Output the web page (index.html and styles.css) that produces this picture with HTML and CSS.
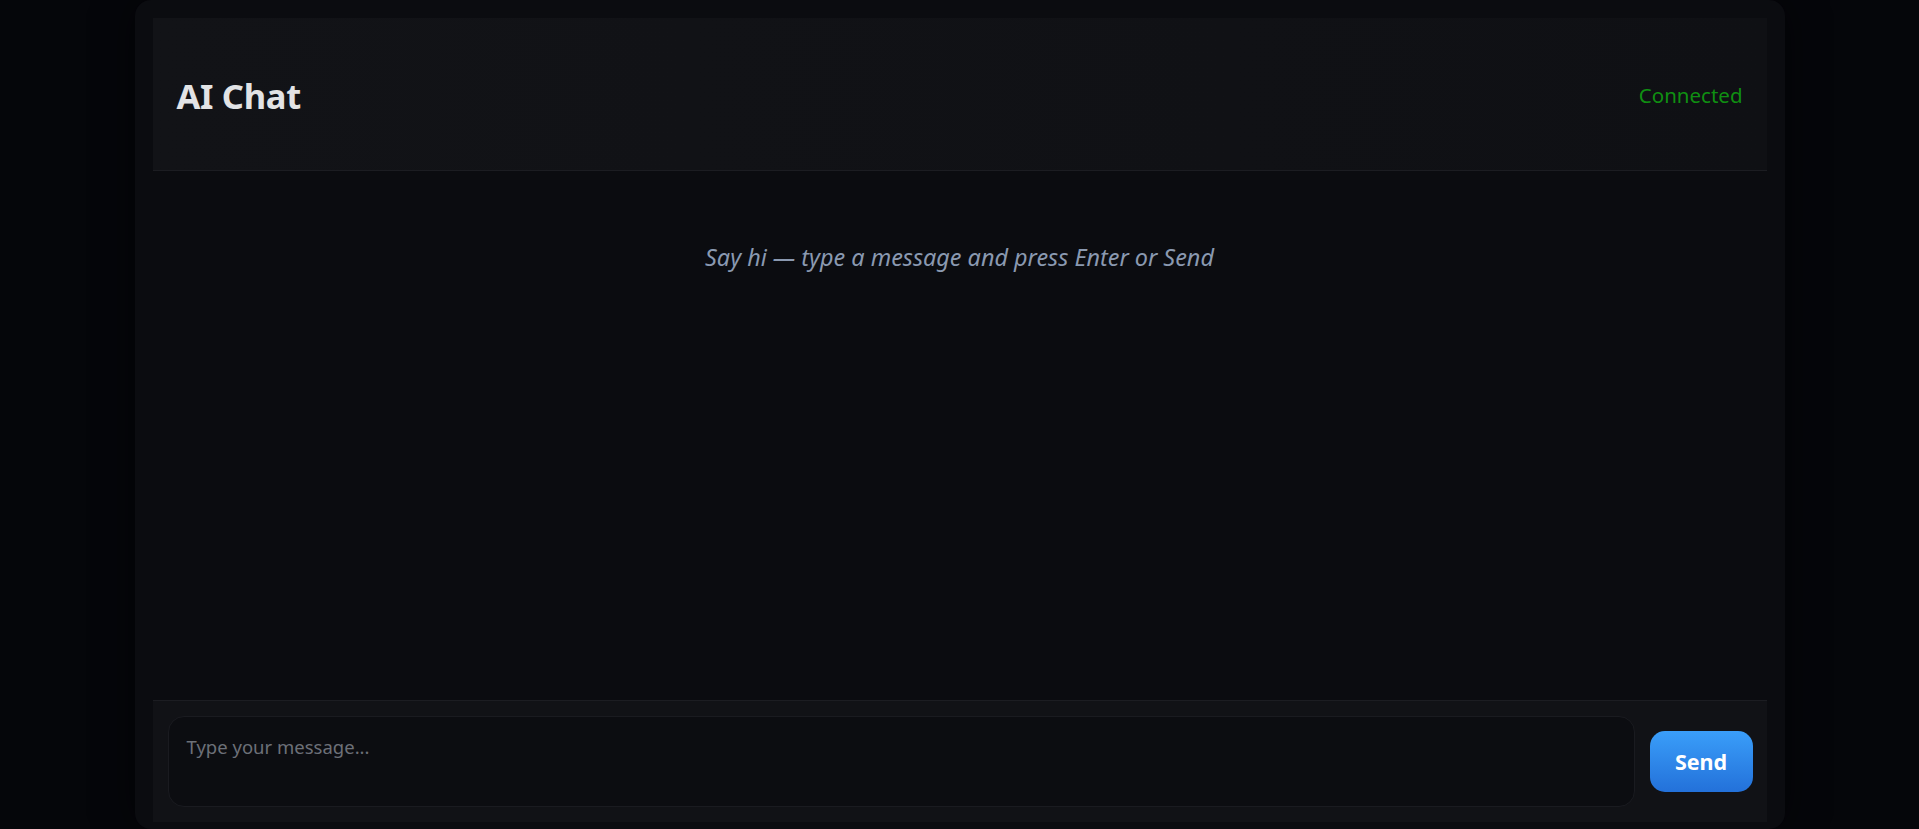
FILE: index.html
```html
<!DOCTYPE html>
<html lang="en">
<head>
<meta charset="utf-8">
<title>AI Chat</title>
<link rel="stylesheet" href="styles.css">
</head>
<body>
<div class="app">
  <header class="header">
    <h1 class="title">AI Chat</h1>
    <span class="status">Connected</span>
  </header>
  <main class="messages">
    <p class="empty">Say hi — type a message and press Enter or Send</p>
  </main>
  <form class="composer">
    <textarea class="input" placeholder="Type your message..."></textarea>
    <button type="button" class="send">Send</button>
  </form>
</div>
</body>
</html>
```
FILE: styles.css
```css
* { box-sizing: border-box; }
html, body { height: 100%; }
body {
  margin: 0;
  background: #05060a;
  font-family: "Noto Sans", "Open Sans", sans-serif;
  overflow: hidden;
}
.app {
  width: 1650px;
  height: 829px;
  margin: 0 auto;
  background: #0b0c10;
  border-radius: 16px;
  padding: 18px 18px 7px;
  display: flex;
  flex-direction: column;
  box-shadow: 0 0 40px rgba(0, 0, 0, 0.55);
}
.header {
  height: 153px;
  flex: none;
  background: linear-gradient(90deg, #121317, #0f1014);
  border-bottom: 1px solid #1c1d22;
  padding: 0 24px;
  display: flex;
  align-items: center;
  justify-content: space-between;
}
.title {
  margin: 0;
  margin-top: 3px;
  font-size: 34.5px;
  font-weight: 700;
  color: #e2e3e5;
  letter-spacing: -0.3px;
}
.status {
  font-size: 20.5px;
  color: #0f8f12;
  margin-top: 2px;
}
.messages {
  flex: 1;
  padding: 70px 24px 24px;
}
.empty {
  margin: 0;
  text-align: center;
  font-style: italic;
  font-size: 23.4px;
  line-height: 1.4;
  color: #8a99b0;
}
.composer {
  flex: none;
  height: 122px;
  margin: 0;
  background: #111216;
  border-top: 1px solid #1c1d22;
  padding: 15px 14px 15px 15px;
  display: flex;
  align-items: center;
  gap: 15px;
}
.input {
  flex: 1;
  height: 91px;
  resize: none;
  background: #0c0d11;
  border: 1px solid #1a1b20;
  border-radius: 16px;
  padding: 17px 18px;
  font-family: inherit;
  font-size: 18.5px;
  color: #d0d2d6;
  outline: none;
}
.input::placeholder { color: #6c7078; }
.send {
  width: 103px;
  height: 61px;
  flex: none;
  border: none;
  border-radius: 15px;
  background: linear-gradient(180deg, #3a9ef9, #2371da);
  color: #ffffff;
  font-family: inherit;
  font-size: 21.5px;
  font-weight: 700;
  padding: 0;
  cursor: pointer;
}
```
